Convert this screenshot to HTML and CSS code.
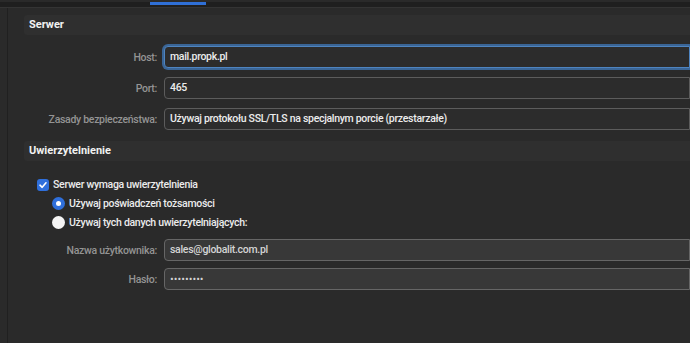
FILE: index.html
```html
<!DOCTYPE html>
<html lang="pl">
<head>
    <meta charset="UTF-8">
    <title>Konto - Serwer</title>
    <link rel="stylesheet" href="styles.css">
</head>
<body>
    <div class="topbar">
        <div class="tab-indicator"></div>
    </div>
    <div class="main">
        <div class="section-title">Serwer</div>
        <div class="form">
            <div class="row">
                <label class="label">Host:</label>
                <div class="field focused">mail.propk.pl</div>
            </div>
            <div class="row">
                <label class="label">Port:</label>
                <div class="field">465</div>
            </div>
            <div class="row">
                <label class="label">Zasady bezpieczeństwa:</label>
                <div class="field">Używaj protokołu SSL/TLS na specjalnym porcie (przestarzałe)</div>
            </div>
        </div>

        <div class="section-title">Uwierzytelnienie</div>
        <div class="auth">
            <div class="check-row">
                <span class="checkbox">
                    <svg width="10" height="10" viewBox="0 0 10 10"><path d="M2 5.2 L4.2 7.3 L8 2.8" fill="none" stroke="#fff" stroke-width="1.6" stroke-linecap="round" stroke-linejoin="round"/></svg>
                </span>
                Serwer wymaga uwierzytelnienia
            </div>
            <div class="radio-row">
                <span class="radio on"></span>
                Używaj poświadczeń tożsamości
            </div>
            <div class="radio-row">
                <span class="radio"></span>
                Używaj tych danych uwierzytelniających:
            </div>
        </div>
        <div class="form lower">
            <div class="row">
                <label class="label">Nazwa użytkownika:</label>
                <div class="field disabled">sales@globalit.com.pl</div>
            </div>
            <div class="row">
                <label class="label">Hasło:</label>
                <div class="field disabled dots">•••••••••</div>
            </div>
        </div>
    </div>
</body>
</html>
```

FILE: styles.css
```css
* {
    box-sizing: border-box;
}

body {
    margin: 0;
    background-color: #2a2a2a;
    color: #ececec;
    font-family: Roboto, Inter, sans-serif;
    font-size: 10.5px;
    font-weight: 500;
    letter-spacing: -0.3px;
    height: 343px;
    overflow: hidden;
}

.topbar {
    height: 6px;
    background-color: #1f1f1f;
    border-bottom: 1px solid #343434;
    padding-left: 150px;
}

.tab-indicator {
    width: 56px;
    height: 3px;
    margin-top: 2px;
    background-color: #2f6fd6;
}

.main {
    margin-left: 7px;
    border-left: 1px solid #202020;
    padding: 7px 0 0 16px;
    height: 337px;
}

.section-title {
    background-color: #2f2f2f;
    height: 20px;
    line-height: 20px;
    padding-left: 5px;
    font-size: 11px;
    font-weight: 700;
    letter-spacing: 0;
    color: #f2f2f2;
    border-radius: 3px 0 0 3px;
}

.form {
    display: flex;
    flex-direction: column;
    gap: 9px;
    padding: 11px 0 11px;
}

.row {
    display: flex;
    align-items: center;
    gap: 7px;
}

.label {
    width: 133px;
    flex-shrink: 0;
    text-align: right;
    white-space: nowrap;
    color: #949494;
}

.field {
    flex: 1;
    height: 22px;
    line-height: 20px;
    padding-left: 5px;
    border: 1px solid #5c5c5c;
    border-radius: 4px 0 0 4px;
    background-color: #2c2c2c;
    white-space: nowrap;
}

.field.focused {
    border-color: #4e84c0;
    box-shadow: 0 0 0 2px #3a6596;
}

.auth {
    padding: 17px 0 0 13px;
    display: flex;
    flex-direction: column;
    gap: 6px;
}

.check-row,
.radio-row {
    display: flex;
    align-items: center;
    gap: 4px;
    height: 13px;
}

.radio-row {
    padding-left: 15px;
}

.checkbox {
    width: 12px;
    height: 12px;
    border-radius: 3px;
    background-color: #2f6fdb;
    display: flex;
    align-items: center;
    justify-content: center;
}

.radio {
    width: 13px;
    height: 13px;
    border-radius: 50%;
    background-color: #f4f4f4;
    display: flex;
    align-items: center;
    justify-content: center;
}

.radio.on {
    background-color: #2f6fdb;
}

.radio.on::after {
    content: "";
    width: 5px;
    height: 5px;
    border-radius: 50%;
    background-color: #fff;
}

.form.lower {
    padding-top: 10px;
    gap: 7px;
}

.field.disabled {
    background-color: #383838;
    border-color: #666;
    color: #d4d4d4;
}

.field.dots {
    font-family: Inter, sans-serif;
    font-size: 7px;
    letter-spacing: 0;
}
```
